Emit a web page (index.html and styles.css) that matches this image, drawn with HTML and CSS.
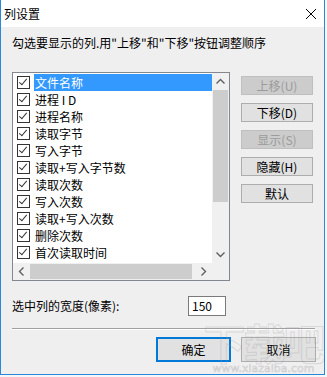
FILE: index.html
```html
<!DOCTYPE html>
<html>
<head>
<meta charset="utf-8">
<link rel="stylesheet" href="styles.css">
</head>
<body>
<div class="window">
  <div class="titlebar">
    <span class="title">列设置</span>
    <svg class="close" width="12" height="12" viewBox="0 0 12 12"><path d="M1 1L11 11M11 1L1 11" stroke="#000" stroke-width="1" fill="none"/></svg>
  </div>
  <div class="content">
    <div class="instr">勾选要显示的列.用"上移"和"下移"按钮调整顺序</div>
    <div class="main">
      <div class="listbox">
        <div class="items">
          <div class="item sel"><span class="cb"></span><span class="txt">文件名称</span></div>
          <div class="item"><span class="cb"></span><span class="txt">进程 I D</span></div>
          <div class="item"><span class="cb"></span><span class="txt">进程名称</span></div>
          <div class="item"><span class="cb"></span><span class="txt">读取字节</span></div>
          <div class="item"><span class="cb"></span><span class="txt">写入字节</span></div>
          <div class="item"><span class="cb"></span><span class="txt">读取+写入字节数</span></div>
          <div class="item"><span class="cb"></span><span class="txt">读取次数</span></div>
          <div class="item"><span class="cb"></span><span class="txt">写入次数</span></div>
          <div class="item"><span class="cb"></span><span class="txt">读取+写入次数</span></div>
          <div class="item"><span class="cb"></span><span class="txt">删除次数</span></div>
          <div class="item"><span class="cb"></span><span class="txt">首次读取时间</span></div>
        </div>
        <div class="vscroll">
          <svg class="arr" width="17" height="17" viewBox="0 0 17 17"><path d="M4.5 10.5L8.5 6.5L12.5 10.5" stroke="#606060" stroke-width="1.4" fill="none"/></svg>
          <div class="vthumb"></div>
          <div class="vspace"></div>
          <svg class="arr" width="17" height="17" viewBox="0 0 17 17"><path d="M4.5 6.5L8.5 10.5L12.5 6.5" stroke="#606060" stroke-width="1.4" fill="none"/></svg>
        </div>
        <div class="hscroll">
          <svg class="arr" width="17" height="17" viewBox="0 0 17 17"><path d="M10.5 4.5L6.5 8.5L10.5 12.5" stroke="#606060" stroke-width="1.4" fill="none"/></svg>
          <div class="hthumb"></div>
          <div class="hspace"></div>
          <svg class="arr" width="17" height="17" viewBox="0 0 17 17"><path d="M6.5 4.5L10.5 8.5L6.5 12.5" stroke="#606060" stroke-width="1.4" fill="none"/></svg>
        </div>
        <div class="corner"></div>
      </div>
      <div class="side">
        <div class="btn dis">上移(U)</div>
        <div class="btn">下移(D)</div>
        <div class="btn dis">显示(S)</div>
        <div class="btn">隐藏(H)</div>
        <div class="btn">默认</div>
      </div>
    </div>
    <div class="widthrow">
      <span class="lbl">选中列的宽度(像素):</span>
      <div class="input">150</div>
    </div>
    <div class="sep"></div>
    <div class="footer">
      <div class="btn big def">确定</div>
      <div class="btn big">取消</div>
    </div>
  </div>
  <div class="wm">
    <div class="wm-big">下载吧</div>
    <div class="wm-url">www.xiazaiba.com</div>
  </div>
</div>
</body>
</html>
```

FILE: styles.css
```css
html, body {
  margin: 0;
  padding: 0;
}
body {
  width: 327px;
  height: 377px;
  background: #f4f6f8;
  font-family: "Noto Sans CJK SC", "Microsoft YaHei", sans-serif;
  font-size: 12px;
  color: #000;
  overflow: hidden;
}
.window {
  position: relative;
  width: 323px;
  height: 374px;
  border-left: 1px solid #2b88d8;
  border-right: 1px solid #2b88d8;
  border-bottom: 1px solid #2b88d8;
  background: #f0eff0;
  display: flex;
  flex-direction: column;
  overflow: hidden;
}
.titlebar {
  height: 27px;
  background: #fff;
  display: flex;
  align-items: center;
  justify-content: space-between;
  padding-left: 3px;
  padding-right: 7px;
}
.title {
  font-size: 12px;
  line-height: 16px;
}
.close {
  display: block;
  margin-top: 1px;
}
.content {
  flex: 1;
  padding: 0 11px;
  display: flex;
  flex-direction: column;
}
.instr {
  margin-top: 8px;
  line-height: 16px;
  height: 16px;
}
.main {
  display: flex;
  margin-top: 21px;
}
.listbox {
  width: 216px;
  height: 207px;
  border: 1px solid #828790;
  background: #fff;
  display: grid;
  grid-template-columns: 199px 17px;
  grid-template-rows: 190px 17px;
}
.items {
  padding-top: 1px;
  overflow: hidden;
}
.item {
  height: 17px;
  display: flex;
  align-items: center;
  padding-left: 4px;
}
.cb {
  width: 11px;
  height: 11px;
  border: 1px solid #333;
  background: #fff;
  flex: none;
  position: relative;
  margin-right: 4px;
}
.cb::after {
  content: "";
  position: absolute;
  left: 3px;
  top: 0px;
  width: 3px;
  height: 7px;
  border-right: 1.3px solid #333;
  border-bottom: 1.3px solid #333;
  transform: rotate(40deg);
}
.txt {
  flex: 1;
  height: 17px;
  line-height: 17px;
  padding-left: 1px;
}
.item.sel .txt {
  background: #3399ff;
  color: #fff;
}
.vscroll {
  background: #f0f0f0;
  display: flex;
  flex-direction: column;
  align-items: center;
}
.arr {
  display: block;
  flex: none;
}
.vthumb {
  width: 15px;
  height: 112px;
  background: #cdcdcd;
  flex: none;
}
.vspace {
  flex: 1;
}
.hscroll {
  background: #f0f0f0;
  display: flex;
  align-items: center;
}
.hthumb {
  width: 162px;
  height: 15px;
  background: #cdcdcd;
  flex: none;
}
.hspace {
  flex: 1;
}
.corner {
  background: #f0f0f0;
}
.side {
  margin-left: 11px;
  padding-top: 4px;
  display: flex;
  flex-direction: column;
  gap: 8px;
}
.btn {
  width: 70px;
  height: 17px;
  border: 1px solid #adadad;
  background: #e1e1e1;
  display: flex;
  align-items: center;
  justify-content: center;
  line-height: 17px;
}
.btn.dis {
  background: #cccccc;
  border-color: #bfbfbf;
  color: #9b9b9b;
}
.widthrow {
  display: flex;
  align-items: center;
  justify-content: space-between;
  margin-top: 15px;
  width: 214px;
}
.lbl {
  line-height: 16px;
}
.input {
  width: 33px;
  height: 18px;
  border: 1px solid #7a7a7a;
  background: #fff;
  padding-left: 3px;
  line-height: 18px;
}
.sep {
  margin-top: 12px;
  width: 303px;
  height: 0;
  border-top: 1px solid #a0a0a0;
  border-bottom: 1px solid #fff;
}
.footer {
  display: flex;
  justify-content: flex-end;
  gap: 10px;
  margin-top: 7px;
  margin-right: -3px;
}
.btn.big {
  width: 73px;
  height: 23px;
}
.btn.def {
  border: 2px solid #0078d7;
  width: 71px;
  height: 21px;
}
.wm {
  position: absolute;
  left: 200px;
  top: 320px;
  width: 125px;
  pointer-events: none;
  text-align: center;
}
.wm-big {
  font-size: 42px;
  line-height: 44px;
  font-weight: 700;
  color: transparent;
  -webkit-text-stroke: 1px rgba(160, 160, 160, 0.3);
  letter-spacing: -2px;
}
.wm-url {
  font-family: "DejaVu Sans", sans-serif;
  font-size: 11px;
  line-height: 12px;
  color: transparent;
  -webkit-text-stroke: 0.6px rgba(150, 150, 150, 0.4);
  margin-top: -1px;
}
```
